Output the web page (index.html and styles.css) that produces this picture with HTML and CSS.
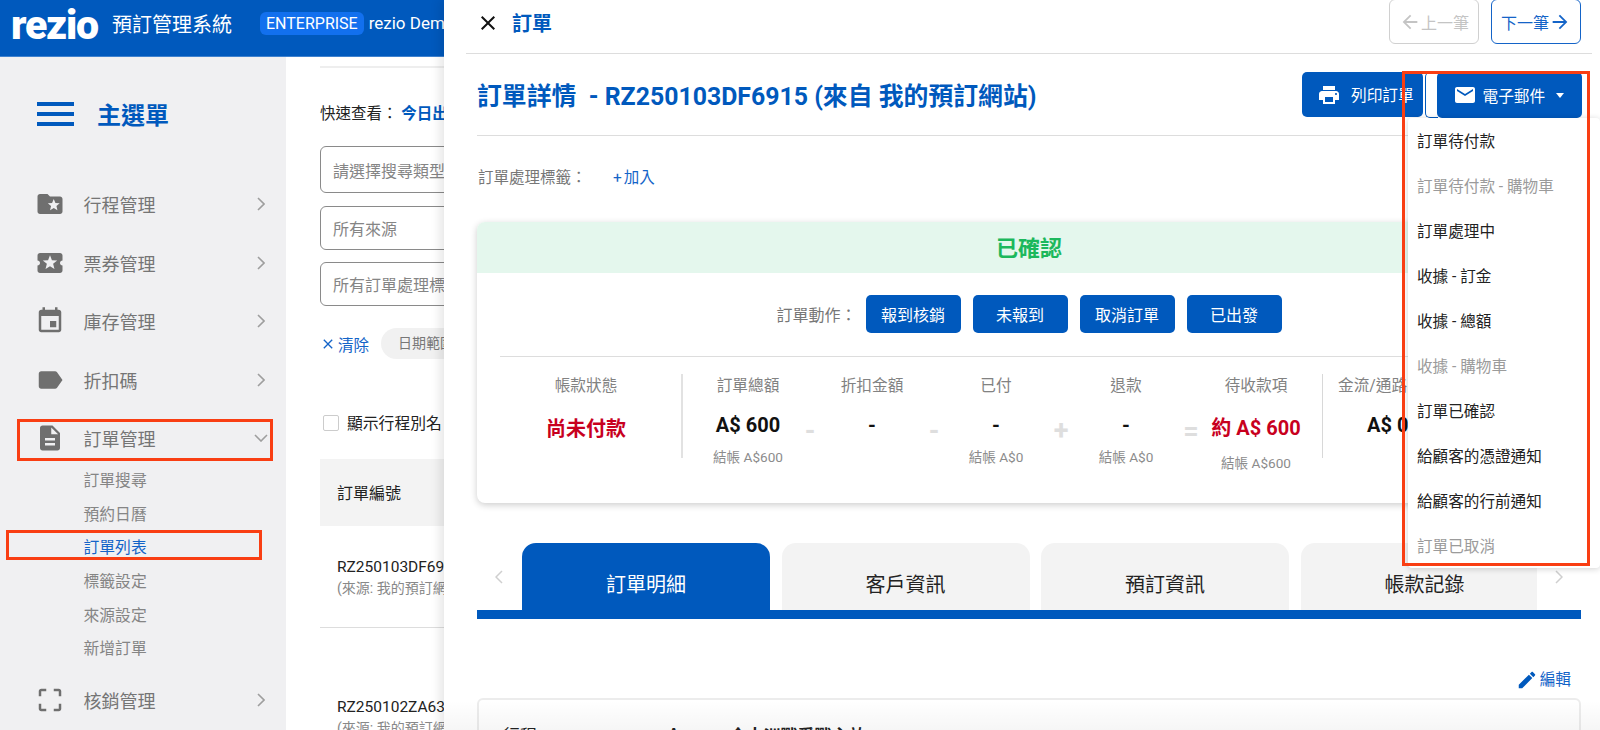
FILE: index.html
```html
<!DOCTYPE html>
<html lang="zh-Hant">
<head>
<meta charset="utf-8">
<title>rezio 預訂管理系統</title>
<link rel="stylesheet" href="styles.css">
</head>
<body>
<div class="app">
  <header class="topbar">
    <span class="logo">rezio</span>
    <span class="sys-title">預訂管理系統</span>
    <span class="badge">ENTERPRISE</span>
    <span class="store">rezio Demo Store</span>
  </header>
  <div class="layout">
    <aside class="sidebar">
      <div class="side-head">
        <span class="burger"><i></i><i></i><i></i></span>
        <span class="side-title">主選單</span>
      </div>
      <nav class="nav">
        <div class="nav-item">
          <svg class="nav-icon" viewBox="0 0 24 24"><path d="M20 6h-8l-2-2H4c-1.1 0-1.99.9-1.99 2L2 18c0 1.1.9 2 2 2h16c1.1 0 2-.9 2-2V8c0-1.1-.9-2-2-2zm-2.06 11L15 15.28 12.06 17l.78-3.33-2.59-2.24 3.41-.29L15 8l1.34 3.14 3.41.29-2.59 2.24.78 3.33z"/></svg>
          <span>行程管理</span>
          <svg class="chev" viewBox="0 0 8 14"><path d="M1 1l6 6-6 6"/></svg>
        </div>
        <div class="nav-item">
          <svg class="nav-icon" viewBox="0 0 24 24"><path d="M20 12c0-1.1.9-2 2-2V6c0-1.1-.9-2-2-2H4c-1.1 0-1.99.9-1.99 2v4c1.1 0 1.99.9 1.99 2s-.89 2-2 2v4c0 1.1.9 2 2 2h16c1.1 0 2-.9 2-2v-4c-1.1 0-2-.9-2-2zm-4.42 4.8L12 14.5l-3.58 2.3 1.08-4.12-3.29-2.69 4.24-.25L12 5.8l1.54 3.95 4.24.25-3.29 2.69 1.09 4.11z"/></svg>
          <span>票券管理</span>
          <svg class="chev" viewBox="0 0 8 14"><path d="M1 1l6 6-6 6"/></svg>
        </div>
        <div class="nav-item">
          <svg class="nav-icon" viewBox="0 0 24 24"><path d="M17 12h-5v5h5v-5zM16 1v2H8V1H6v2H5c-1.11 0-1.99.9-1.99 2L3 19c0 1.1.89 2 2 2h14c1.1 0 2-.9 2-2V5c0-1.1-.9-2-2-2h-1V1h-2zm3 18H5V8h14v11z"/></svg>
          <span>庫存管理</span>
          <svg class="chev" viewBox="0 0 8 14"><path d="M1 1l6 6-6 6"/></svg>
        </div>
        <div class="nav-item">
          <svg class="nav-icon" viewBox="0 0 24 24"><path d="M17.63 5.84C17.27 5.33 16.67 5 16 5L5 5.01C3.9 5.01 3 5.9 3 7v10c0 1.1.9 1.99 2 1.99L16 19c.67 0 1.27-.33 1.63-.84L22 12l-4.37-6.16z"/></svg>
          <span>折扣碼</span>
          <svg class="chev" viewBox="0 0 8 14"><path d="M1 1l6 6-6 6"/></svg>
        </div>
        <div class="nav-item open">
          <svg class="nav-icon" viewBox="0 0 24 24"><path d="M14 2H6c-1.1 0-1.99.9-1.99 2L4 20c0 1.1.89 2 1.99 2H18c1.1 0 2-.9 2-2V8l-6-6zm2 16H8v-2h8v2zm0-4H8v-2h8v2zm-3-5V3.5L18.5 9H13z"/></svg>
          <span>訂單管理</span>
          <svg class="chev-down" viewBox="0 0 14 8"><path d="M1 1l6 6 6-6"/></svg>
        </div>
        <div class="subnav">
          <a>訂單搜尋</a>
          <a>預約日曆</a>
          <a class="active">訂單列表</a>
          <a>標籤設定</a>
          <a>來源設定</a>
          <a>新增訂單</a>
        </div>
        <div class="nav-item">
          <svg class="nav-icon" viewBox="0 0 24 24"><path d="M3 5v4h2V5h4V3H5c-1.1 0-2 .9-2 2zm2 10H3v4c0 1.1.9 2 2 2h4v-2H5v-4zm14 4h-4v2h4c1.1 0 2-.9 2-2v-4h-2v4zm0-16h-4v2h4v4h2V5c0-1.1-.9-2-2-2z"/></svg>
          <span>核銷管理</span>
          <svg class="chev" viewBox="0 0 8 14"><path d="M1 1l6 6-6 6"/></svg>
        </div>
      </nav>
    </aside>
    <main class="main">
      <div class="main-rule"></div>
      <div class="quick">快速查看： <b>今日出發</b></div>
      <div class="field field-tall">請選擇搜尋類型</div>
      <div class="field">所有來源</div>
      <div class="field field-last">所有訂單處理標籤</div>
      <div class="filter-row">
        <span class="clear"><svg viewBox="0 0 24 24"><path d="M19 6.41L17.59 5 12 10.59 6.41 5 5 6.41 10.59 12 5 17.59 6.41 19 12 13.41 17.59 19 19 17.59 13.41 12z"/></svg>清除</span>
        <span class="chip">日期範圍</span>
      </div>
      <label class="check-row"><span class="check"></span>顯示行程別名</label>
      <div class="table-head">訂單編號</div>
      <div class="order-row first">
        <div class="order-no">RZ250103DF6915</div>
        <div class="order-src">(來源: 我的預訂網站)</div>
      </div>
      <div class="order-row">
        <div class="order-no">RZ250102ZA6321</div>
        <div class="order-src">(來源: 我的預訂網站)</div>
      </div>
    </main>
  </div>

  <section class="drawer">
    <div class="drawer-head">
      <svg class="close" viewBox="0 0 24 24"><path d="M19 6.41L17.59 5 12 10.59 6.41 5 5 6.41 10.59 12 5 17.59 6.41 19 12 13.41 17.59 19 19 17.59 13.41 12z"/></svg>
      <span class="drawer-title">訂單</span>
      <div class="pager">
        <button class="page-btn disabled"><svg viewBox="0 0 24 24"><path d="M20 11H7.83l5.59-5.59L12 4l-8 8 8 8 1.41-1.41L7.83 13H20v-2z"/></svg>上一筆</button>
        <button class="page-btn">下一筆<svg viewBox="0 0 24 24"><path d="M12 4l-1.41 1.41L16.17 11H4v2h12.17l-5.58 5.59L12 20l8-8z"/></svg></button>
      </div>
    </div>
    <div class="title-row">
      <h1 class="order-title">訂單詳情&nbsp; - RZ250103DF6915 (來自 我的預訂網站)</h1>
      <div class="title-actions">
        <button class="solid-btn print"><svg viewBox="0 0 24 24"><path d="M19 8H5c-1.66 0-3 1.34-3 3v6h4v4h12v-4h4v-6c0-1.66-1.34-3-3-3zm-3 11H8v-5h8v5zm3-7c-.55 0-1-.45-1-1s.45-1 1-1 1 .45 1 1-.45 1-1 1zm-1-9H6v4h12V3z"/></svg>列印訂單</button>
        <div class="mail-split">
          <span class="mail-stub"></span>
          <button class="solid-btn mail"><svg viewBox="0 0 24 24"><path d="M20 4H4c-1.1 0-1.99.9-1.99 2L2 18c0 1.1.9 2 2 2h16c1.1 0 2-.9 2-2V6c0-1.1-.9-2-2-2zm0 4l-8 5-8-5V6l8 5 8-5v2z"/></svg>電子郵件<span class="caret"></span></button>
          <ul class="mail-menu">
            <li>訂單待付款</li>
            <li class="off">訂單待付款 - 購物車</li>
            <li>訂單處理中</li>
            <li>收據 - 訂金</li>
            <li>收據 - 總額</li>
            <li class="off">收據 - 購物車</li>
            <li>訂單已確認</li>
            <li>給顧客的憑證通知</li>
            <li>給顧客的行前通知</li>
            <li class="off">訂單已取消</li>
          </ul>
        </div>
      </div>
    </div>
    <div class="tag-row"><span class="tag-label">訂單處理標籤：</span><span class="tag-add">+ 加入</span></div>

    <div class="status-card">
      <div class="status-head">已確認</div>
      <div class="actions">
        <span class="actions-label">訂單動作：</span>
        <button class="act-btn">報到核銷</button>
        <button class="act-btn">未報到</button>
        <button class="act-btn">取消訂單</button>
        <button class="act-btn">已出發</button>
      </div>
      <div class="status-rule"></div>
      <div class="stats">
        <div class="stat-main">
          <div class="stat-label">帳款狀態</div>
          <div class="stat-big">尚未付款</div>
        </div>
        <div class="stat">
          <div class="stat-label">訂單總額</div>
          <div class="stat-value">A$ 600</div>
          <div class="stat-sub">結帳 A$600</div>
        </div>
        <div class="op">-</div>
        <div class="stat">
          <div class="stat-label">折扣金額</div>
          <div class="stat-value">-</div>
        </div>
        <div class="op">-</div>
        <div class="stat">
          <div class="stat-label">已付</div>
          <div class="stat-value">-</div>
          <div class="stat-sub">結帳 A$0</div>
        </div>
        <div class="op wide">+</div>
        <div class="stat">
          <div class="stat-label">退款</div>
          <div class="stat-value">-</div>
          <div class="stat-sub">結帳 A$0</div>
        </div>
        <div class="op wide">=</div>
        <div class="stat due">
          <div class="stat-label">待收款項</div>
          <div class="stat-big">約 A$ 600</div>
          <div class="stat-sub">結帳 A$600</div>
        </div>
        <div class="stat-gate">
          <div class="stat-label">金流/通路</div>
          <div class="stat-value">A$ 0</div>
        </div>
      </div>
    </div>

    <div class="tabs-wrap">
      <svg class="tab-chev" viewBox="0 0 8 14"><path d="M7 1L1 7l6 6"/></svg>
      <div class="tabs">
        <div class="tab current">訂單明細</div>
        <div class="tab">客戶資訊</div>
        <div class="tab">預訂資訊</div>
        <div class="tab">帳款記錄</div>
      </div>
      <svg class="tab-chev" viewBox="0 0 8 14"><path d="M1 1l6 6-6 6"/></svg>
    </div>
    <div class="tab-bar"></div>
    <div class="edit-row"><svg viewBox="0 0 24 24"><path d="M3 17.25V21h3.75L17.81 9.94l-3.75-3.75L3 17.25zM20.71 7.04c.39-.39.39-1.02 0-1.41l-2.34-2.34c-.39-.39-1.02-.39-1.41 0l-1.83 1.83 3.75 3.75 1.83-1.83z"/></svg>編輯</div>
    <div class="detail-card">
      <span class="detail-key">行程</span><span class="detail-val detail-latin">A</span><span class="detail-val">今大洲戰爭戰主效</span>
    </div>
  </section>

  <div class="mark mark-parent"></div>
  <div class="mark mark-child"></div>
  <div class="mark mark-menu"></div>
</div>
</body>
</html>
```

FILE: styles.css
```css
* { box-sizing: border-box; }
html, body { margin: 0; padding: 0; height: 100%; }
body {
  font-family: Roboto, "Noto Sans CJK TC", "Noto Sans", sans-serif;
  color: #222;
  background: #fff;
  overflow: hidden;
}
button { font-family: inherit; border: 0; padding: 0; cursor: pointer; }

.app { position: relative; width: 1600px; height: 730px; overflow: hidden; }

/* top bar */
.topbar {
  height: 57px;
  background: #0059bd;
  color: #fff;
  display: flex;
  align-items: flex-start;
  padding-left: 11px;
  white-space: nowrap;
  border-bottom: 1px solid #3f82cf;
}
.logo {
  font-family: Roboto, sans-serif;
  font-weight: 900;
  font-size: 41px;
  line-height: 50px;
  letter-spacing: -1.2px;
  width: 101px;
  flex: none;
}
.sys-title { font-size: 20px; line-height: 30px; margin-top: 10px; }
.badge {
  margin-left: 28px;
  margin-top: 12px;
  height: 23px;
  line-height: 23px;
  padding: 0 6px;
  background: #1270ee;
  border-radius: 6px;
  font-size: 16px;
}
.store { margin-left: 5px; margin-top: 12px; font-size: 17px; line-height: 23px; }

.layout { display: flex; height: 673px; }

/* sidebar */
.sidebar { width: 286px; flex: none; background: #f0f0f2; padding-top: 45px; }
.side-head { display: flex; align-items: center; height: 24px; padding-left: 37px; gap: 23px; }
.burger { width: 37px; height: 24px; display: flex; flex-direction: column; justify-content: space-between; }
.burger i { display: block; height: 4px; background: #0059bd; }
.side-title { font-size: 24px; font-weight: 700; color: #0059bd; line-height: 24px; padding-top: 3px; }
.nav { margin-top: 57px; }
.nav-item {
  height: 42px;
  margin-bottom: 16.5px;
  padding-left: 34.5px;
  display: flex;
  align-items: center;
  font-size: 18px;
  color: #757575;
}
.nav-item.open { margin-bottom: 5px; }
.nav-icon { width: 30px; height: 30px; fill: #6f6f6f; margin-right: 19px; flex: none; }
.chev { width: 8px; height: 14px; margin-left: auto; margin-right: 21px; fill: none; stroke: #9e9e9e; stroke-width: 1.6; }
.chev-down { width: 14px; height: 8px; margin-left: auto; margin-right: 18px; fill: none; stroke: #9e9e9e; stroke-width: 1.6; }
.subnav { display: flex; flex-direction: column; margin-bottom: 13px; padding-left: 83.5px; }
.subnav a { height: 33.7px; line-height: 33.7px; font-size: 15.8px; color: #858585; }
.subnav a.active { color: #1464c8; }

/* list behind the drawer */
.main { flex: 1; padding: 9px 0 0 34px; white-space: nowrap; overflow: hidden; }
.main-rule { height: 2px; width: 400px; background: #eee; }
.quick { margin-top: 34px; font-size: 15.5px; line-height: 24px; color: #222; }
.quick b { color: #0059bd; font-weight: 700; }
.field {
  width: 400px;
  height: 44px;
  margin-top: 12px;
  border: 1px solid #8a8a8a;
  border-radius: 6px;
  padding-left: 12px;
  display: flex;
  align-items: center;
  font-size: 16px;
  color: #858585;
}
.field-tall { height: 47px; margin-top: 20px; }
.field + .field { margin-top: 13px; }
.field-last + .filter-row { margin-top: 22px; }
.field.field-last { margin-top: 12px; }
.filter-row { display: flex; align-items: center; height: 31px; }
.clear { display: flex; align-items: center; gap: 2px; color: #1464c8; font-size: 15.5px; width: 61px; }
.clear svg { width: 16px; height: 16px; fill: #1464c8; }
.chip {
  width: 300px;
  height: 31px;
  line-height: 31px;
  padding-left: 17px;
  border-radius: 16px;
  background: #f1f1f1;
  color: #777;
  font-size: 14px;
}
.check-row { display: flex; align-items: center; gap: 8px; margin: 55px 0 0 3px; height: 17px; font-size: 15.8px; color: #222; }
.check { width: 16px; height: 16px; border: 1px solid #ccc; border-radius: 2px; background: #fff; }
.table-head {
  width: 400px;
  height: 67px;
  margin-top: 28px;
  background: #f3f3f3;
  padding-left: 17px;
  padding-bottom: 1px;
  display: flex;
  align-items: center;
  font-size: 16px;
}
.order-row { width: 400px; padding: 69px 0 0 17px; }
.order-row.first { height: 102px; padding-top: 31px; border-bottom: 1px solid #ddd; }
.order-no { font-size: 15.5px; line-height: 20px; color: #222; }
.order-src { margin-top: 1px; font-size: 14px; line-height: 20px; color: #888; }

/* drawer */
.drawer {
  position: absolute;
  top: 0; right: 0; bottom: 0;
  left: 444px;
  background: #fff;
  box-shadow: -4px 0 10px rgba(0, 0, 0, .1);
  overflow: hidden;
}
.drawer::after {
  content: "";
  position: absolute;
  left: 0; right: 0; bottom: 0;
  height: 30px;
  background: linear-gradient(rgba(0, 0, 0, 0), rgba(0, 0, 0, .035));
  pointer-events: none;
}
.drawer-head {
  height: 54px;
  margin: 0 8px 0 22px;
  padding: 0 11px 8px 10px;
  border-bottom: 1px solid #ddd;
  display: flex;
  align-items: center;
}
.close { width: 24px; height: 24px; fill: #111; flex: none; }
.drawer-title { margin-left: 12px; font-size: 20px; font-weight: 700; color: #0059bd; }
.pager { margin-left: auto; align-self: flex-start; display: flex; gap: 12px; margin-top: -1px; }
.page-btn {
  width: 90px;
  height: 45px;
  background: #fff;
  border: 1px solid #1464c8;
  border-radius: 6px;
  color: #1464c8;
  font-size: 16px;
  display: flex;
  align-items: center;
  justify-content: center;
}
.page-btn svg { width: 22px; height: 22px; fill: currentColor; }
.page-btn.disabled { color: #c4c4c4; border-color: #d0d0d0; }

.title-row {
  height: 82px;
  margin: 0 19px 0 33px;
  border-bottom: 1px solid #ddd;
  display: flex;
  align-items: center;
  justify-content: space-between;
}
.order-title { margin: 0; font-size: 24.85px; font-weight: 700; color: #0059bd; white-space: nowrap; padding-bottom: 1px; }
.title-actions { display: flex; gap: 2px; align-self: flex-start; margin: 18px -1px 0 0; }
.solid-btn {
  height: 45px;
  background: #0059bd;
  color: #fff;
  font-size: 15.7px;
  border-radius: 5px;
  display: flex;
  align-items: center;
}
.solid-btn svg { width: 24px; height: 24px; fill: #fff; flex: none; }
.print { width: 121px; padding-left: 15px; gap: 10px; }
.mail-split { position: relative; display: flex; }
.mail-stub { width: 13px; height: 46px; margin-right: -1px; border: 1px solid #0059bd; border-right: 0; border-radius: 5px 0 0 5px; background: #fff; }
.mail { width: 145px; height: 46px; padding-left: 15.5px; gap: 6px; }
.caret { margin-left: 5px; border: 4.5px solid transparent; border-top: 5px solid #fff; border-bottom: 0; }
.mail-menu {
  position: absolute;
  top: 46px;
  right: -18px;
  width: 192px;
  height: 450px;
  margin: 0;
  padding: 1.5px 0 0 9px;
  list-style: none;
  background: #fff;
  border-radius: 4px;
  box-shadow: 0 1px 6px rgba(0, 0, 0, .18);
  z-index: 3;
}
.mail-menu li { height: 45.1px; line-height: 45.1px; font-size: 15.6px; color: #222; white-space: nowrap; }
.mail-menu li.off { color: #9b9b9b; }

.tag-row { height: 86px; margin-left: 34px; padding-bottom: 6px; display: flex; align-items: center; }
.tag-label { width: 135px; color: #777; font-size: 15.5px; }
.tag-add { color: #1464c8; font-size: 15.5px; word-spacing: -2px; }

.status-card {
  height: 281px;
  margin: 0 19px 0 33px;
  background: #fff;
  border-radius: 8px;
  box-shadow: 0 2px 7px rgba(0, 0, 0, .2);
  overflow: hidden;
}
.status-head {
  height: 51px;
  padding-bottom: 3px;
  background: #e4f7ed;
  color: #1cb85c;
  font-size: 22px;
  font-weight: 700;
  display: flex;
  align-items: center;
  justify-content: center;
}
.actions { margin: 22px 0 0; display: flex; justify-content: center; align-items: center; gap: 12px; }
.actions-label { margin-right: -3px; font-size: 16px; color: #777; width: 80px; white-space: nowrap; }
.act-btn { width: 95px; height: 38px; background: #0059bd; color: #fff; border-radius: 5px; font-size: 16px; }
.status-rule { height: 1px; margin: 23px 23px 0; background: #ddd; }
.stats { display: flex; margin: 17px 0 0 14px; white-space: nowrap; }
.stat-main { width: 192px; height: 84px; border-right: 2px solid #e2e2e2; text-align: center; }
.stat-main .stat-big { margin-top: 16px; }
.stat { width: 102px; text-align: center; }
.stat:nth-child(2) { margin-left: 14px; }
.stat-label { font-size: 15.7px; line-height: 24px; color: #828282; }
.stat-value { margin-top: 15px; font-size: 20px; font-weight: 700; line-height: 24px; color: #111; }
.stat-sub { margin-top: 10px; font-size: 13.6px; line-height: 20px; color: #8c8c8c; }
.stat-big { margin-top: 15px; font-size: 20px; font-weight: 700; line-height: 30px; color: #c8001e; }
.due .stat-sub { margin-top: 10px; }
.op { width: 22px; height: 24px; margin-top: 45px; text-align: center; font-size: 27px; font-weight: 700; line-height: 24px; color: #dedede; }
.op.wide { width: 28px; }
.stat-gate { margin-left: 15px; padding-left: 15px; height: 84px; border-left: 1px solid #d8d8d8; width: 160px; }
.stat-gate .stat-value { margin-left: 29px; }

.tabs-wrap { margin: 40px 19px 0 33px; height: 67px; display: flex; align-items: flex-start; }
.tab-chev { width: 8px; height: 14px; margin: 27px 0 0 18px; flex: none; fill: none; stroke: #cfcfcf; stroke-width: 1.5; }
.tabs { width: 1015px; display: flex; gap: 11.5px; margin-left: 19px; overflow: hidden; flex: none; }
.tab {
  width: 248px;
  height: 67px;
  flex: none;
  padding-top: 27px;
  background: #f3f3f3;
  border-radius: 14px 14px 0 0;
  text-align: center;
  font-size: 20px;
  line-height: 30px;
  color: #222;
}
.tab.current { background: #0059bd; color: #fff; }
.tab-bar { height: 9px; margin: 0 19px 0 33px; background: #0059bd; }
.edit-row {
  height: 79px;
  padding: 49px 29px 0 0;
  display: flex;
  justify-content: flex-end;
  align-items: flex-start;
  gap: 2px;
  font-size: 15.7px;
  line-height: 24px;
  color: #1464c8;
}
.edit-row svg { width: 22px; height: 22px; fill: #0059bd; margin-top: 1px; }
.detail-card {
  height: 120px;
  margin: 0 19px 0 33px;
  padding: 22px 0 0 24px;
  border: 2px solid #ececec;
  border-radius: 6px;
  font-size: 17px;
  color: #222;
}
.detail-key { display: inline-block; width: 165px; }
.detail-val { display: inline-block; margin-right: 50px; font-weight: 700; }
.detail-latin { vertical-align: 2px; }

/* annotation frames */
.mark { position: absolute; border: 3px solid #f93e13; pointer-events: none; z-index: 5; }
.mark-parent { left: 17px; top: 419px; width: 256px; height: 42px; }
.mark-child { left: 6px; top: 530px; width: 256px; height: 30px; }
.mark-menu { left: 1402px; top: 71px; width: 188px; height: 495px; }
```
